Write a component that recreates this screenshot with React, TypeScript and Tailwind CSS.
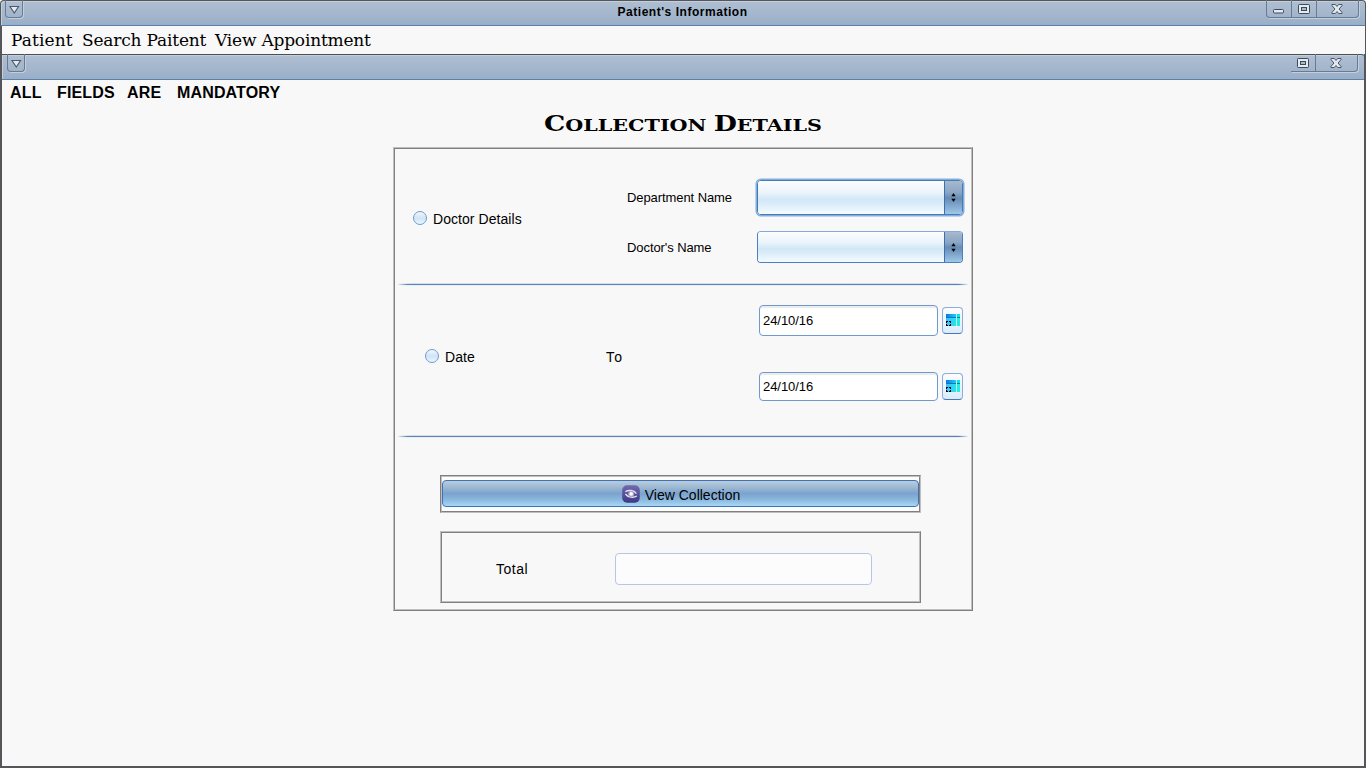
import type { ReactNode } from "react";

function MenuTriangle() {
  return (
    <div className="h-[18px] w-[18px] rounded-b-[4px] border border-t-0 border-[#6b7b8f] shadow-[1px_1px_0_#c3cfdd]">
      <svg width="16" height="17" viewBox="0 0 16 17" className="block">
        <path d="M4 6.5 H12.6 L8.3 13 Z" fill="#e4eaf1" stroke="#4d5967" strokeWidth="1.1" />
      </svg>
    </div>
  );
}

function MinimizeIcon() {
  return (
    <svg width="12" height="17" viewBox="0 0 12 17">
      <rect x="0.5" y="9.5" width="10" height="3.5" rx="1" fill="#e4eaf1" stroke="#3f4a57" />
    </svg>
  );
}

function MaximizeIcon() {
  return (
    <svg width="12" height="17" viewBox="0 0 12 17">
      <rect x="0.5" y="4.5" width="11" height="9" rx="0.8" fill="#e4eaf1" stroke="#3f4a57" />
      <rect x="3.5" y="7.5" width="5" height="3" fill="#a9b9cc" stroke="#3f4a57" />
    </svg>
  );
}

function CloseIcon() {
  return (
    <svg width="12" height="17" viewBox="0 0 12 17">
      <path
        d="M1 4.5 H4.3 L6 6.5 L7.7 4.5 H11 V5.6 L8 9 L11 12.4 V13.5 H7.7 L6 11.5 L4.3 13.5 H1 V12.4 L4 9 L1 5.6 Z"
        fill="#e4eaf1"
        stroke="#4a5562"
        strokeWidth="1"
      />
    </svg>
  );
}

function Ridge({ className, inner, children }: { className: string; inner: string; children: ReactNode }) {
  return (
    <div className={`border border-t-[#bfbfbf] border-l-[#bfbfbf] border-r-[#808080] border-b-[#808080] ${className}`}>
      <div className={`h-full border border-t-[#808080] border-l-[#808080] border-r-[#bfbfbf] border-b-[#bfbfbf] ${inner}`}>
        {children}
      </div>
    </div>
  );
}

function Separator() {
  return (
    <div className="mx-[2px] h-[3px]">
      <div className="h-px bg-[linear-gradient(to_right,transparent,#d3deea_14px,#d3deea_calc(100%-14px),transparent)]" />
      <div className="h-px bg-[linear-gradient(to_right,transparent,#5f87b5_10px,#5f83ae_calc(100%-10px),transparent)]" />
      <div className="h-px bg-[linear-gradient(to_right,transparent,#e6edf4_14px,#e6edf4_calc(100%-14px),transparent)]" />
    </div>
  );
}

function Radio({ label }: { label: string }) {
  return (
    <div className="flex h-[16px] items-center">
      <span className="h-[14px] w-[14px] rounded-full border border-[#6f9ad0] bg-linear-to-b from-[#f2f8fd] via-[#cfe4f5] to-[#eaf6ff]" />
      <span className="ml-[6px] pt-px text-[14px] leading-[16px] tracking-[0.06px]">{label}</span>
    </div>
  );
}

function Combo({ focused }: { focused?: boolean }) {
  return (
    <div
      className={
        focused
          ? "flex h-[35px] w-[206px] overflow-hidden rounded-[4px] border border-[#4579b8] shadow-[0_0_0_1.5px_#82aedb]"
          : "flex h-[32px] w-[206px] overflow-hidden rounded-[4px] border border-[#4c7fc0] border-t-[#84a9dc]"
      }
    >
      <div className="flex-1 bg-[linear-gradient(to_bottom,#fcfdfe,#eaf4fb_35%,#d3e8f7_55%,#d6eaf8_65%,#f4fbff)]" />
      <div className="flex w-[18px] items-center justify-center border-l border-[#3b70b3] bg-[linear-gradient(to_bottom,#a7b9ce,#8aa5c3_35%,#678cb5_52%,#7ca3ca_72%,#9fc7e7)]">
        <svg width="5" height="9" viewBox="0 0 5 9">
          <path d="M0.3 3.3 L2.5 0 L4.7 3.3 Z M0.3 5.7 L2.5 9 L4.7 5.7 Z" fill="#000" />
        </svg>
      </div>
    </div>
  );
}

function CalendarIcon() {
  return (
    <svg width="14" height="12" viewBox="0 0 14 12" shapeRendering="crispEdges" className="-mt-px">
      <defs>
        <linearGradient id="sky" x1="0" y1="0" x2="1" y2="0">
          <stop offset="0" stopColor="#0078ff" />
          <stop offset="0.65" stopColor="#25c0f8" />
          <stop offset="1" stopColor="#00f5e0" />
        </linearGradient>
        <linearGradient id="aqua" x1="0" y1="0" x2="1" y2="0">
          <stop offset="0" stopColor="#3fbcff" />
          <stop offset="1" stopColor="#22efe0" />
        </linearGradient>
      </defs>
      <rect width="14" height="12" fill="url(#aqua)" />
      <rect width="14" height="4" fill="url(#sky)" />
      <rect y="3" width="14" height="1" fill="#087fa6" />
      <rect x="10" width="1" height="12" fill="#b5fff0" />
      <path d="M0 7h2v1H1v1H0zM3 7h2v2H4V8H3zM0 10h1v1h1v1H0zM4 10h1v2H3v-1h1z" fill="#000" />
    </svg>
  );
}

function DateField({ tall }: { tall?: boolean }) {
  return (
    <div className={tall ? "flex h-[31px] items-start" : "flex h-[29px] items-start"}>
      <div className="flex h-full w-[179px] items-center rounded-[4px] border border-[#7099d0] bg-white pl-[3px] text-[13px] shadow-[inset_0_2px_1px_#ececec]">
        <span className="leading-[15px] tracking-[-0.05px]">24/10/16</span>
      </div>
      <div
        className={`ml-[4px] flex h-[27px] w-[21px] items-center justify-center rounded-[4px] border border-[#8badde] border-b-[#4678b6] bg-linear-to-b from-[#fcfdff] via-[#edf4fb] to-[#d9ecfb] pl-px ${
          tall ? "mt-[2px]" : "mt-px"
        }`}
      >
        <CalendarIcon />
      </div>
    </div>
  );
}

function EyeIcon() {
  return (
    <svg width="18" height="18" viewBox="0 0 18 18">
      <defs>
        <linearGradient id="violet" x1="0" y1="0" x2="0" y2="1">
          <stop offset="0" stopColor="#7369ae" />
          <stop offset="1" stopColor="#3d3886" />
        </linearGradient>
      </defs>
      <rect x="0.2" y="0.2" width="17.6" height="17.6" rx="5" fill="url(#violet)" />
      <path d="M3.4 6.8 C6 4.8 12 4.8 14.4 8.6" fill="none" stroke="#e4e1f3" strokeWidth="1.4" />
      <path d="M3.4 9 C6 12.8 12 12.8 14.8 11" fill="none" stroke="#e4e1f3" strokeWidth="1.4" />
      <circle cx="9.2" cy="8.9" r="3" fill="#a9a4d2" />
      <circle cx="9.2" cy="8.9" r="1.8" fill="#fffdf0" />
    </svg>
  );
}

export default function App() {
  return (
    <div className="flex h-[768px] w-[1366px] flex-col overflow-hidden bg-[#f8f8f8] font-['Liberation_Sans',sans-serif] text-black">
      <header className="grid h-[26px] shrink-0 grid-cols-[1fr_auto_1fr] items-start rounded-t-[4px] border-t border-r border-l border-b border-[#55565a] border-b-[#5e80a8] bg-linear-to-b from-[#b0bfd2] to-[#99afc8] shadow-[inset_1px_1px_0_#c3cfdd]">
        <div className="-mt-px ml-[4px]">
          <MenuTriangle />
        </div>
        <h1 className="mt-[4px] -ml-px text-[12px] leading-[15px] font-bold tracking-[0.53px]">Patient's Information</h1>
        <div className="-mt-px mr-[6px] flex h-[18px] w-[93px] justify-self-end rounded-b-[4px] border border-t-0 border-[#6b7b8f] shadow-[1px_1px_0_#c3cfdd]">
          <div className="flex w-[25px] justify-center border-r border-[#6b7b8f]"><MinimizeIcon /></div>
          <div className="flex w-[25px] justify-center border-r border-[#6b7b8f]"><MaximizeIcon /></div>
          <div className="flex flex-1 justify-center pr-px"><CloseIcon /></div>
        </div>
      </header>

      <nav className="flex h-[28px] shrink-0 border-r border-l-2 border-[#55565a] pl-[9px] font-['DejaVu_Serif',serif] text-[17px] leading-[28px] whitespace-nowrap">
        <span className="w-[71px] tracking-[0.1px]">Patient</span>
        <span className="w-[133px] tracking-[-0.18px]">Search Paitent</span>
        <span className="tracking-[-0.2px]">View Appointment</span>
      </nav>

      <main className="flex flex-1 flex-col border-r-2 border-b-2 border-l-2 border-[#55565a]">
        <div className="flex h-[26px] items-start justify-between bg-[#3fe0e0]">
          <div className="flex h-[26px] flex-1 items-start justify-between rounded-tr-[3px] border-t border-b border-t-[#4d4e52] border-b-[#5e80a8] bg-linear-to-b from-[#b0bfd2] to-[#99afc8] shadow-[inset_1px_1px_0_#c3cfdd]">
            <div className="-mt-px ml-[5px]">
              <MenuTriangle />
            </div>
            <div className="-mt-px mr-[6px] flex h-[18px] w-[67px] rounded-br-[4px] border-r border-b border-[#6b7b8f] shadow-[1px_1px_0_#c3cfdd]">
              <div className="flex w-[25px] justify-center border-r border-[#6b7b8f]"><MaximizeIcon /></div>
              <div className="flex flex-1 justify-center pr-px"><CloseIcon /></div>
            </div>
          </div>
        </div>

        <p className="flex h-[24px] pt-[4px] pl-[8px] text-[16px] leading-[18px] font-bold tracking-[0.15px]">
          <span className="w-[47px]">ALL</span>
          <span className="w-[70px]">FIELDS</span>
          <span className="w-[50px]">ARE</span>
          <span>MANDATORY</span>
        </p>

        <h2 className="flex h-[43px] scale-x-[1.215] items-baseline justify-center pt-[7px] font-['DejaVu_Serif',serif] text-[17px] leading-[24px] font-bold whitespace-pre uppercase">
          <span className="text-[22px]">C</span>
          <span>ollection </span>
          <span className="text-[22px]">D</span>
          <span>etails</span>
        </h2>

        <Ridge className="ml-[391px] h-[464px] w-[580px]" inner="flex flex-col">
          <section className="flex h-[134px]">
            <div className="w-[232px] pt-[61px] pl-[18px]">
              <Radio label="Doctor Details" />
            </div>
            <div className="w-[130px] pt-[41px] text-[13px] leading-[15px] tracking-[-0.08px]">
              <p>Department Name</p>
              <p className="mt-[35px]">Doctor's Name</p>
            </div>
            <div className="flex flex-col gap-[16px] pt-[31px]">
              <Combo focused />
              <Combo />
            </div>
          </section>
          <Separator />
          <section className="flex h-[149px]">
            <div className="w-[211px] pt-[62px] pl-[30px]">
              <Radio label="Date" />
            </div>
            <p className="w-[153px] pt-[63px] text-[14px] leading-[16px] tracking-[1.3px]">To</p>
            <div className="flex flex-col gap-[36px] pt-[19px]">
              <DateField tall />
              <DateField />
            </div>
          </section>
          <Separator />
          <section className="pt-[37px] pl-[45px]">
            <div className="h-[38px] w-[481px] border border-t-[#808080] border-r-[#bfbfbf] border-b-[#bfbfbf] border-l-[#808080]">
              <div className="h-full border border-t-[#bfbfbf] border-r-[#808080] border-b-[#808080] border-l-[#bfbfbf] bg-[#fcfcfc] pt-[3px]">
                <button className="flex h-[27px] w-[477px] items-center justify-center rounded-[4px] border border-[#3d73b9] bg-[linear-gradient(to_bottom,#b9ccdc,#9db9d3_25%,#7ba3cd_50%,#88b5dc_72%,#a8d7f5)] pl-px text-[14px]">
                  <EyeIcon />
                  <span className="ml-[5px] pt-[2px] leading-[16px]">View Collection</span>
                </button>
              </div>
            </div>
            <Ridge className="mt-[18px] h-[72px] w-[481px]" inner="flex">
              <span className="mt-[28px] ml-[54px] w-[119px] text-[14px] leading-[16px] tracking-[0.5px]">Total</span>
              <div className="mt-[20px] h-[32px] w-[257px] rounded-[4px] border border-[#b4c8e5] bg-[#fcfcfc]" />
            </Ridge>
          </section>
        </Ridge>
      </main>
    </div>
  );
}
